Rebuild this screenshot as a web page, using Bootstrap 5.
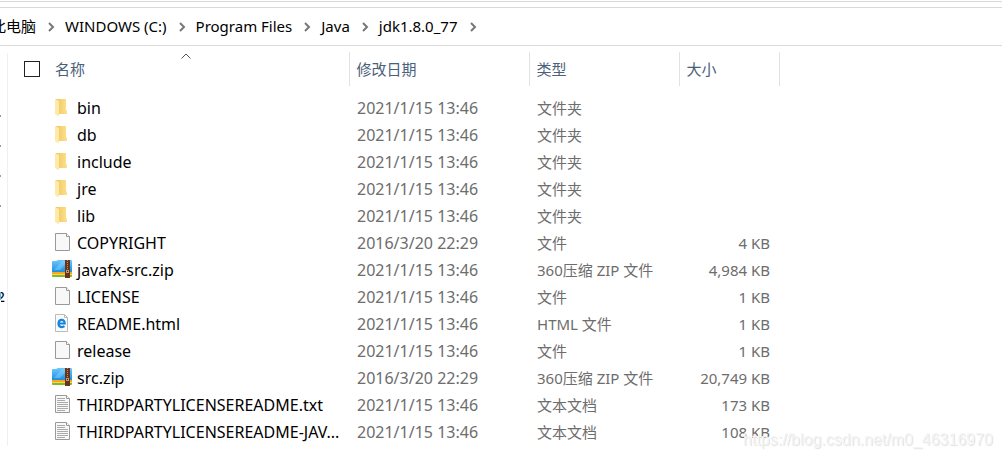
<!DOCTYPE html>
<html lang="zh-CN">
<head>
<meta charset="utf-8">
<meta name="viewport" content="width=device-width, initial-scale=1">
<title>jdk1.8.0_77</title>
<link href="https://cdn.jsdelivr.net/npm/bootstrap@5.3.0/dist/css/bootstrap.min.css" rel="stylesheet">
<style>
  body { font: 15px/27px "Noto Sans", "Noto Sans CJK SC", sans-serif; color: #000; background: #fff; }
  .toolbar-edge { height: 7px; border-top: 1px solid #d9d9d9; border-bottom: 1px solid #d9d9d9; margin-top: 1px; }
  .path-bar { height: 38px; border-bottom: 1px solid #d9d9d9; }
  .path-bar ol { margin-left: -9px; }
  .path-bar a { color: #000; text-decoration: none; }
  .chev { width: 29px; height: 10px; fill: none; stroke: #777; stroke-width: 2; flex: none; }
  .side { width: 8px; border-right: 1px solid #f0f0f0; margin-top: 7px; padding-top: 48px; }
  .side li { height: 30px; overflow: hidden; }
  .pin { width: 1px; height: 2px; background: #999; }
  .drive { width: 1px; height: 8px; background: #5bb8f0; }
  .clip { width: 4px; overflow: hidden; direction: rtl; }
  .files { width: 771px; table-layout: fixed; margin-top: 6px; }
  .files th { height: 34px; padding: 0 7px; font-weight: 400; color: #4c607a; border-right: 1px solid #e2e2e2; }
  .files td { height: 27px; padding: 0 9px 0 8px; color: #6d6d6d; white-space: nowrap; }
  .files tbody::before { content: ""; display: block; height: 9px; }
  .files .fname { color: #000; font-size: 16px; padding: 0; }
  .files .stamp { font-size: 16px; }
  .files .pick { border-right: 0; padding: 0 0 0 16px; }
  .files .first { padding-left: 3px; }
  .pick input { appearance: none; width: 16px; height: 16px; border: 1px solid #222; margin: 0; display: block; background: #fff; }
  .pick input:checked { background: #0078d7; }
  .files .ico { padding: 0; }
  .ico svg { display: block; width: 20px; height: 20px; margin-top: -3px; }
  .sort { top: 0; left: 129px; width: 10px; height: 8px; fill: none; stroke: #555; }
  .watermark { right: 9px; bottom: 7px; font: 16px/24px "Liberation Sans", sans-serif; color: #f4f4f4; text-shadow: 1px 1px 1px #e0e0e0; pointer-events: none; }
</style>
</head>
<body>
<svg class="position-absolute" width="0" height="0" aria-hidden="true">
  <defs>
    <linearGradient id="gold"><stop stop-color="#ecc765"/><stop offset="1" stop-color="#ffe08a"/></linearGradient>
    <linearGradient id="sky" x2="0" y2="1"><stop stop-color="#6fc8ff"/><stop offset="1" stop-color="#1c8fe0"/></linearGradient>
  </defs>
  <symbol id="folder" viewBox="0 0 20 20"><path d="M4 2h10v11l1 1v3H4z" fill="url(#gold)"/><path d="M3 2l4 2v15H6l-3-2z" fill="#ffe9a6"/></symbol>
  <symbol id="page" viewBox="0 0 20 20"><path d="M3.5 1.5h11l3 3v14h-14z" fill="#f8f8f8" stroke="#999"/><path d="M14.5 1.5v3h3" fill="#fff" stroke="#999"/></symbol>
  <symbol id="text" viewBox="0 0 20 20"><use href="#page"/><path d="M5 4.5h8M5 6.5h8M5 8.5h11M5 10.5h11M5 12.5h11M5 14.5h11M5 16.5h8" stroke="#aaa"/></symbol>
  <symbol id="web" viewBox="0 0 20 20"><path d="M3.5 1.5h9l3 3v14h-12z" fill="#fafafa" stroke="#bbb"/><path d="M12.5 1.5v3h3" fill="none" stroke="#bbb"/><path d="M6.5 10.5h6.200c0-5-6-4.500-6.200 0 0 4.200 4 4 6 2.700" fill="none" stroke="#1683dd" stroke-width="2.200"/></symbol>
  <symbol id="zip" viewBox="0 0 20 20"><path d="M0 3q0-1 1-1h3l2-1h13q1 0 1 1v11H0z" fill="url(#sky)"/><path d="M2 11l8-9h6l-8 9z" fill="#9bdcff" opacity=".4"/><path d="M0 13h20v2H0z" fill="#ffa51d"/><path d="M0 15h20v2H0z" fill="#ffd64a"/><path d="M0 16h20v1q0 1-1 1H1q-1 0-1-1z" fill="#77bd2c"/><path d="M13 1h5v18h-5z" fill="#65351d"/><path d="M15.500 1v9" stroke="#c38b5d" stroke-dasharray="1 1"/><path d="M14 11h3v3h-3z" fill="#c69a63"/><path d="M15 12h1v1h-1z" fill="#3b1b0b"/></symbol>
</svg>

<div class="toolbar-edge"></div>
<nav class="path-bar overflow-hidden d-flex align-items-center" aria-label="路径">
  <ol class="list-unstyled d-flex mb-0 text-nowrap" id="path"></ol>
</nav>

<main class="d-flex">
  <aside class="side flex-shrink-0 overflow-hidden">
    <ul class="list-unstyled mb-0">
      <li class="d-flex align-items-center"><span class="pin"></span></li>
      <li class="d-flex align-items-center"><span class="pin"></span></li>
      <li class="d-flex align-items-center"><span class="pin"></span></li>
      <li class="d-flex align-items-center"><span class="pin"></span></li>
      <li></li><li></li>
      <li class="d-flex align-items-center"><span class="drive"></span><span class="clip">02</span></li>
    </ul>
  </aside>
  <div class="flex-grow-1">
    <table class="files">
      <colgroup><col style="width:44px"><col style="width:25px"><col style="width:272px"><col style="width:180px"><col style="width:150px"><col style="width:100px"></colgroup>
      <thead>
        <tr>
          <th class="pick"><input type="checkbox" aria-label="全选"></th>
          <th class="first position-relative" colspan="2">名称<svg class="sort position-absolute" viewBox="0 0 10 8"><path d="M.5 6.500L5 2l4.500 4.500"/></svg></th>
          <th>修改日期</th><th>类型</th><th>大小</th>
        </tr>
      </thead>
      <tbody id="rows"></tbody>
    </table>
  </div>
</main>
<div class="watermark position-fixed">https://blog.csdn.net/m0_46316970</div>

<script src="https://cdn.jsdelivr.net/npm/bootstrap@5.3.0/dist/js/bootstrap.bundle.min.js"></script>
<script>
  const chevron = '<svg class="chev" viewBox="0 0 29 10"><path d="M13 1l4 4-4 4"/></svg>';
  document.getElementById('path').innerHTML =
    ['此电脑', 'WINDOWS (C:)', 'Program Files', 'Java', 'jdk1.8.0_77']
      .map(p => `<li class="d-flex align-items-center"><a href="#">${p}</a>${chevron}</li>`).join('');

  const late = '2021/1/15 13:46', early = '2016/3/20 22:29';
  const files = [
    ['folder', 'bin', late, '文件夹', ''],
    ['folder', 'db', late, '文件夹', ''],
    ['folder', 'include', late, '文件夹', ''],
    ['folder', 'jre', late, '文件夹', ''],
    ['folder', 'lib', late, '文件夹', ''],
    ['page', 'COPYRIGHT', early, '文件', '4 KB'],
    ['zip', 'javafx-src.zip', late, '360压缩 ZIP 文件', '4,984 KB'],
    ['page', 'LICENSE', late, '文件', '1 KB'],
    ['web', 'README.html', late, 'HTML 文件', '1 KB'],
    ['page', 'release', late, '文件', '1 KB'],
    ['zip', 'src.zip', early, '360压缩 ZIP 文件', '20,749 KB'],
    ['text', 'THIRDPARTYLICENSEREADME.txt', late, '文本文档', '173 KB'],
    ['text', 'THIRDPARTYLICENSEREADME-JAV...', late, '文本文档', '108 KB']
  ];
  document.getElementById('rows').innerHTML = files.map(([icon, name, date, type, size]) =>
    `<tr><td></td><td class="ico"><svg><use href="#${icon}"/></svg></td><td class="fname">${name}</td><td class="stamp">${date}</td><td>${type}</td><td class="text-end">${size}</td></tr>`).join('');
</script>
</body>
</html>
